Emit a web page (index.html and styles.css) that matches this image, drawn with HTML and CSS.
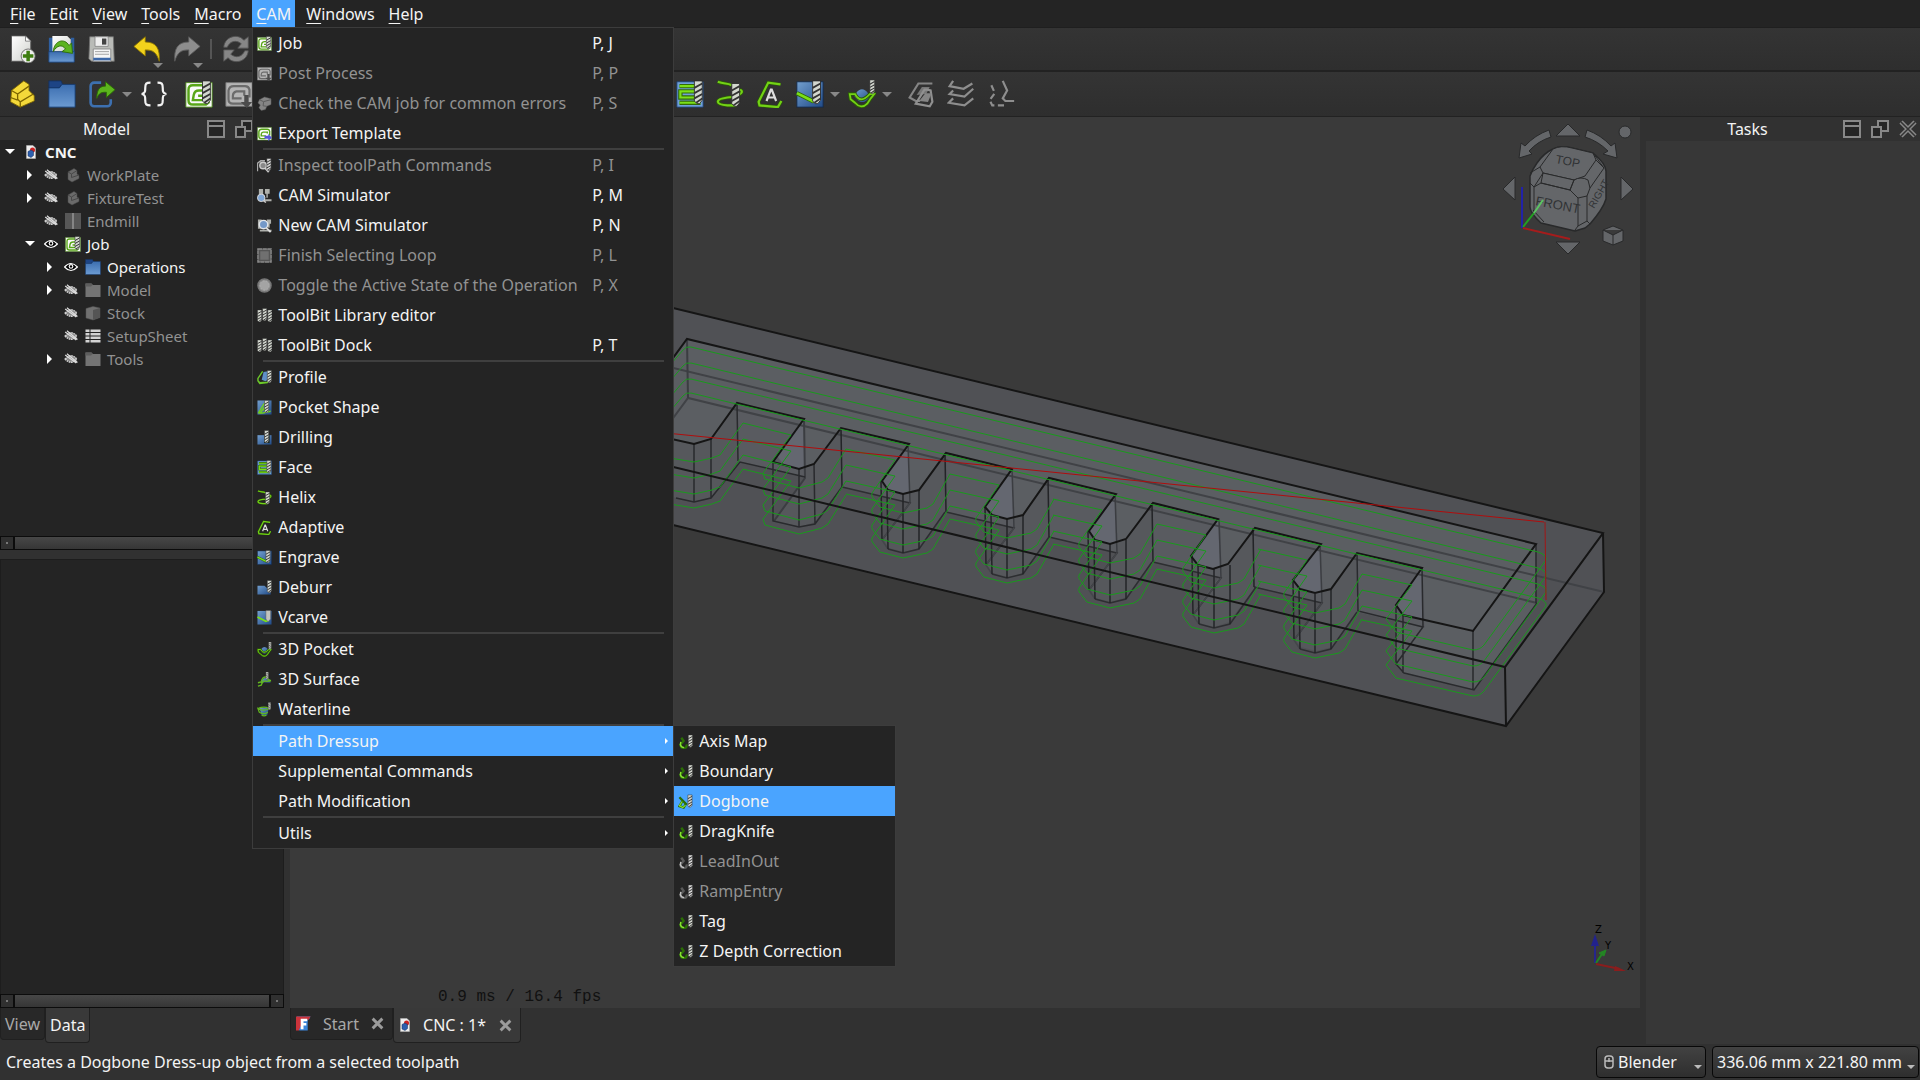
FILE: index.html
```html
<!DOCTYPE html>
<html lang="en">
<head>
<meta charset="utf-8">
<title>CNC</title>
<link rel="stylesheet" href="styles.css">
</head>
<body>
<svg class="defs" aria-hidden="true">
  <defs>
    <linearGradient id="blue" x1="0" y1="0" x2="1" y2="1"><stop offset="0" stop-color="#729fcf"/><stop offset="1" stop-color="#204a87"/></linearGradient>
    <linearGradient id="folderblue" x1="0" y1="0" x2="0" y2="1"><stop offset="0" stop-color="#3c6eb0"/><stop offset="1" stop-color="#6c9bd2"/></linearGradient>
    <linearGradient id="paper" x1="0" y1="0" x2="1" y2="1"><stop offset="0" stop-color="#fff"/><stop offset="1" stop-color="#d0d2cd"/></linearGradient>
    <g id="bit">
      <path d="M0 0h9v22l-3 4H3l-3-3z" fill="#d3d7cf" stroke="#2a2a2a"/>
      <path d="M0 8l9-5M0 14l9-5M0 20l9-5M2 25l7-5" stroke="#333" stroke-width="2" fill="none"/>
    </g>
    <symbol id="i-new" viewBox="0 0 32 32"><path d="M4 1h16l6 6v23H4z" fill="url(#paper)" stroke="#555"/><path d="M20 1l6 6h-6z" fill="#fff" stroke="#777"/><circle cx="23" cy="24" r="8" fill="#eeeeec" stroke="#666"/><path d="M23 18v12M17 24h12" stroke="#3e7d10" stroke-width="4"/></symbol>
    <symbol id="i-open" viewBox="0 0 32 32"><path d="M1 3h5v20H1zM26 3h4v20h-4z" fill="#2f5fa0"/><path d="M5 1h17l4 4v14H5z" fill="url(#paper)"/><path d="M1 19h29v12H1z" fill="url(#folderblue)" stroke="#1d4680"/><path d="M6 19C7 6 19 3 24 12l3-3 1 12-12-2 4-3C16 10 10 12 6 19z" fill="#5bb320" stroke="#2b6a05"/></symbol>
    <symbol id="i-save" viewBox="0 0 32 32"><path d="M2 2h27l1 28H4l-3-3z" fill="#b9bbb7" stroke="#6d6d6d"/><path d="M8 2h15v11H8z" fill="#eee" stroke="#888"/><path d="M16 4h5v7h-5z" fill="#444"/><path d="M6 16h20v14H6z" fill="#f6f6f6" stroke="#888"/><path d="M8 19h16M8 22h16" stroke="#999"/><path d="M6 26h20v3H6z" fill="#3d68a8"/></symbol>
    <symbol id="i-undo" viewBox="0 0 32 32"><path d="M1 13L14 2v6c13 0 17 8 16 22C27 20 23 17 14 17v7z" fill="#f2d21c" stroke="#8a7400"/></symbol>
    <symbol id="i-redo" viewBox="0 0 32 32"><path d="M31 13L18 2v6C5 8 1 16 2 30 5 20 9 17 18 17v7z" fill="#8d8d8d" stroke="#5a5a5a"/></symbol>
    <symbol id="i-refresh" viewBox="0 0 32 32"><path d="M2 14C3 1 19-2 25 6l5-4v13H18l4-5C16 5 9 7 6 14z" fill="#868686" stroke="#555"/><path d="M30 18C29 31 13 34 7 26l-5 4V17h12l-4 5c6 5 13 3 16-4z" fill="#868686" stroke="#555"/></symbol>
    <symbol id="i-part" viewBox="0 0 32 32"><path d="M4 12L18 1l6 4v7l6 6v6L14 31 3 25z" fill="#f4d93a" stroke="#7d6500"/><path d="M4 12l7 4 13-9M11 16v6l3 3 15-9M14 25v6M3 20l8 3" fill="none" stroke="#7d6500" stroke-width="1.5"/></symbol>
    <symbol id="i-folder" viewBox="0 0 32 32"><path d="M1 1h14l2 5h-2L13 9H1z" fill="#1d4485" stroke="#153260"/><path d="M1 9h12l3-4h15v26H1z" fill="url(#folderblue)" stroke="#153a70"/></symbol>
    <symbol id="i-link" viewBox="0 0 32 32"><path d="M15 3H7a4 4 0 0 0-4 4v19a4 4 0 0 0 4 4h15a4 4 0 0 0 4-4v-4" fill="none" stroke="#3d70b0" stroke-width="3"/><path d="M10 21C10 9 15 7 20 7V2l11 9-10 9v-6c-5 0-8 0-11 7z" fill="#5cb51d" stroke="#2b6a05"/></symbol>
    <symbol id="i-braces" viewBox="0 0 32 32"><path d="M12 3c-5 0-6 1-6 6 0 4 0 6-4 7 4 1 4 3 4 7 0 5 1 6 6 6M20 3c5 0 6 1 6 6 0 4 0 6 4 7-4 1-4 3-4 7 0 5-1 6-6 6" fill="none" stroke="#f2f2f2" stroke-width="2.5"/></symbol>
    <symbol id="i-job" viewBox="0 0 32 32"><path d="M1 3h30v28H1z" fill="#fafafa" stroke="#4e8d1a"/><path d="M21 6H9Q4 6 4 11v12q0 5 5 5h15l4-3M20 12h-4q-5 0-6 5l-1 6h11M20 18h-5" fill="none" stroke="#58a618" stroke-width="2.8"/><use href="#bit" x="20" y="1"/></symbol>
    <symbol id="i-post" viewBox="0 0 32 32"><path d="M1 3h30v27H1z" fill="#b5b5b5" stroke="#777"/><path d="M28 20V11q-1-4-5-4H10Q5 7 4 12v10q0 5 5 5h13M22 18v-5h-9q-4 1-4 5v3h10" fill="none" stroke="#6b6b6b" stroke-width="2.5"/><path d="M22 17h5v8h4l-6 7-7-7h4z" fill="#4c4c4c"/></symbol>
    <symbol id="i-check" viewBox="0 0 32 32"><path d="M5 8L16 2l14 4v12l-9 4-3 7-9 2-5-6 3-6-5-4z" fill="#858585" stroke="#555"/><path d="M5 8l9 4 15-4M14 13l-1 8 8 1" stroke="#5a5a5a" fill="none" stroke-width="2"/></symbol>
    <symbol id="i-export" viewBox="0 0 32 32"><path d="M1 3h30v27H1z" fill="#fafafa" stroke="#4e8d1a"/><path d="M27 20V11q-1-4-5-4H10Q5 7 4 12v10q0 5 5 5h9M22 16v-3h-9q-4 1-4 5v3h10" fill="none" stroke="#58a618" stroke-width="3"/><path d="M16 21h8v-4l8 8-8 7v-5h-8z" fill="#5555d8"/></symbol>
    <symbol id="i-inspect" viewBox="0 0 32 32"><path d="M1 28V11l7-5h9" fill="none" stroke="#aaa" stroke-width="3"/><circle cx="13" cy="16" r="7" fill="#888" stroke="#ccc" stroke-width="3"/><path d="M17 21l8 9" stroke="#ccc" stroke-width="4"/><use href="#bit" x="21" y="1"/></symbol>
    <symbol id="i-sim" viewBox="0 0 32 32"><path d="M4 2h9v12H4zM17 2h10v10h-4v9h-3v-9h-3zM14 24h17v4H14z" fill="#aeb0ac"/><circle cx="9" cy="21" r="8" fill="#7fa6d6" stroke="#ddd" stroke-width="2"/><path d="M14 27l5 4" stroke="#ccc" stroke-width="3"/></symbol>
    <symbol id="i-newsim" viewBox="0 0 32 32"><path d="M2 3h8v20H2zM21 3h9v9h-3v9h-3zM6 25h25v4H6z" fill="#aeb0ac"/><circle cx="14" cy="14" r="9" fill="#7398c8" stroke="#e0e4e8" stroke-width="3"/><path d="M20 21l9 9" stroke="#ddd" stroke-width="4"/></symbol>
    <symbol id="i-loop" viewBox="0 0 32 32"><path d="M2 2h28v28H2z" fill="#555" stroke="#8b8b8b" stroke-width="3" stroke-dasharray="9 1"/><path d="M7 7h18v18H7z" fill="#707070"/></symbol>
    <symbol id="i-toggle" viewBox="0 0 32 32"><circle cx="16" cy="16" r="14" fill="#8d8d8d" stroke="#777" stroke-width="3"/><circle cx="16" cy="16" r="10" fill="#a4a4a4" stroke="#c0c0c0" stroke-dasharray="4 3"/></symbol>
    <symbol id="i-bits" viewBox="0 0 32 32"><use href="#bit" x="1" y="4"/><use href="#bit" x="12" y="1"/><use href="#bit" x="23" y="4"/></symbol>
    <symbol id="i-profile" viewBox="0 0 32 32"><path d="M10 21l4-17 12-2v17l-8 5z" fill="#5f8fc8"/><path d="M12 3L2 18v5l4 4 16-1 5-7M2 23l4 6 16-2 7-8" fill="none" stroke="#6cc82a" stroke-width="3"/><use href="#bit" x="22" y="1"/></symbol>
    <symbol id="i-pocket" viewBox="0 0 32 32"><path d="M1 1h30v30H1z" fill="url(#blue)"/><path d="M3 28L15 8l8-2M7 28l9-13M3 28h8l18-4M12 21l7-1" fill="none" stroke="#73d216" stroke-width="3"/><use href="#bit" x="16" y="1"/></symbol>
    <symbol id="i-drill" viewBox="0 0 32 32"><path d="M1 11h30v20H1z" fill="url(#blue)"/><path d="M15 11h12v17H15z" fill="#1e2a22"/><use href="#bit" x="16" y="1"/></symbol>
    <symbol id="i-face" viewBox="0 0 32 32"><path d="M1 2h30v29H1z" fill="#6f9fd8" stroke="#1c3f70"/><path d="M4 7h20M27 13H5v7h20M4 26h24" fill="none" stroke="#326a05" stroke-width="5"/><path d="M4 7h20M27 13H5v7h20M4 26h24" fill="none" stroke="#7be019" stroke-width="2.5"/><use href="#bit" x="21" y="1"/></symbol>
    <symbol id="i-helix" viewBox="0 0 32 32"><path d="M2 2c8 3 10 1 16 4M22 10c14 1 7 9-9 10C-2 22-1 28 13 29h10" fill="none" stroke="#2c5a08" stroke-width="4"/><path d="M2 2c8 3 10 1 16 4M22 10c14 1 7 9-9 10C-2 22-1 28 13 29h10" fill="none" stroke="#73d216" stroke-width="2.5"/><use href="#bit" x="18" y="4"/></symbol>
    <symbol id="i-adapt" viewBox="0 0 32 32"><path d="M28 5L14 3 3 25l1 4 21 2 4-7" fill="none" stroke="#2c5a08" stroke-width="4"/><path d="M28 5L14 3 3 25l1 4 21 2 4-7" fill="none" stroke="#73d216" stroke-width="2.5"/><path d="M12 24l5-13h1l5 13M14 20h7" fill="none" stroke="#ddd" stroke-width="2.5"/></symbol>
    <symbol id="i-engrave" viewBox="0 0 32 32"><path d="M1 2h30v29H1z" fill="url(#blue)" stroke="#12294a"/><path d="M1 15l18 9 6-2" fill="none" stroke="#326a05" stroke-width="5"/><path d="M1 15l18 9 6-2" fill="none" stroke="#7be019" stroke-width="3"/><use href="#bit" x="19" y="1"/></symbol>
    <symbol id="i-deburr" viewBox="0 0 32 32"><path d="M1 12h15l13 12v7H1z" fill="url(#blue)"/><use href="#bit" x="22" y="1"/></symbol>
    <symbol id="i-vcarve" viewBox="0 0 32 32"><path d="M1 2h30v29H1z" fill="url(#blue)"/><path d="M1 15l18 9 6-2" fill="none" stroke="#7be019" stroke-width="4"/><path d="M19 1h10v18l-4 5h-3l-3-5z" fill="#c2c4be" stroke="#555"/></symbol>
    <symbol id="i-pocket3d" viewBox="0 0 32 32"><path d="M9 15q7-9 14 0l2 4q-9 13-18-1z" fill="url(#blue)"/><path d="M2 16h6q6 12 17 0h5l-4 5-4 6q-7 7-14-1l-5-4z" fill="none" stroke="#2c5a08" stroke-width="4"/><path d="M2 16h6q6 12 17 0h5l-4 5-4 6q-7 7-14-1l-5-4z" fill="none" stroke="#73d216" stroke-width="2"/><g transform="translate(25 0) scale(.6)"><use href="#bit"/></g></symbol>
    <symbol id="i-surf3d" viewBox="0 0 32 32"><path d="M8 24q4-16 18-9l3 8-15-1z" fill="url(#blue)"/><path d="M2 23l7-2q3-12 12-10 2 8 9 7M2 30l7-2q4-12 11-8l10-1" fill="none" stroke="#62b81e" stroke-width="3"/><g transform="translate(19 0) scale(.6)"><use href="#bit"/></g></symbol>
    <symbol id="i-water" viewBox="0 0 32 32"><path d="M5 12h20l-3 16H10z" fill="url(#blue)"/><path d="M2 14q13-6 24 0-12 7-24 0l3 8q10 6 18 0M10 28q5 3 10 0" fill="none" stroke="#62b81e" stroke-width="2.5"/><g transform="translate(24 1) scale(.6)"><use href="#bit"/></g></symbol>
    <symbol id="i-dress" viewBox="0 0 32 32"><path d="M7 8l5 7-7 8q1 7 8 7 7-1 5-8" fill="none" stroke="#2c7004" stroke-width="5"/><path d="M6 17l-1 6q2 6 8 6" fill="none" stroke="#8ae234" stroke-width="3"/><use href="#bit" x="22" y="2"/></symbol>
    <symbol id="i-dogbone" viewBox="0 0 32 32"><path d="M3 7l14 14-5 8-9-3 6-10" fill="none" stroke="#2c7004" stroke-width="5"/><path d="M9 16l-6 9 7 4 6-5" fill="none" stroke="#8ae234" stroke-width="2.5"/><use href="#bit" x="21" y="2"/></symbol>
    <symbol id="i-g1" viewBox="0 0 32 32"><path d="M29 4H13L3 20l7 4h5" fill="none" stroke="#858585" stroke-width="2.5"/><path d="M11 17L17 8h9l-4 8z" fill="#777"/><path d="M23 11h-3L10 27l16 3 3-5-2-13z" fill="none" stroke="#909090" stroke-width="2.5"/><path d="M14 24l7-9h7l-4 10z" fill="#858585"/></symbol>
    <symbol id="i-g2" viewBox="0 0 32 32"><path d="M7 1L3 7l16 3L29 4M7 12l-4 4 17 3 10-9M7 21l-5 5 18 3 10-8" fill="none" stroke="#8e8e8e" stroke-width="2.5"/></symbol>
    <symbol id="i-g3" viewBox="0 0 32 32"><path d="M18 1l5 11-5 9 3 3h10" fill="none" stroke="#8e8e8e" stroke-width="2.5"/><path d="M5 6l4 9-6 8 3 6h14" fill="none" stroke="#8e8e8e" stroke-width="2.5" stroke-dasharray="7 4"/></symbol>
    <symbol id="i-doc" viewBox="0 0 20 28"><path d="M1 1h13l5 5v21H1z" fill="#eee" stroke="#bbb"/><circle cx="13" cy="10" r="5" fill="#cc2222"/><path d="M4 13l6-3 5 3v8l-5 4-6-3z" fill="#2d5fae" stroke="#152e58"/></symbol>
    <symbol id="i-eye" viewBox="0 0 24 20"><path d="M1 10Q12-2 23 10 12 22 1 10z" fill="#000" stroke="#fff" stroke-width="2"/><circle cx="12" cy="9" r="4" fill="#fff"/><circle cx="12" cy="9" r="2" fill="#000"/></symbol>
    <symbol id="i-hid" viewBox="0 0 24 20"><path d="M2 10Q12-1 22 10 12 21 2 10z" fill="#888" stroke="#d2d2d2" stroke-width="2.5" stroke-dasharray="3 1"/><path d="M2 3l19 14M5 1l18 15" stroke="#ddd" stroke-width="2"/></symbol>
    <symbol id="i-body" viewBox="0 0 32 32"><path d="M6 10L18 3l6 4v7l4 3v6L14 30l-8-5z" fill="#6a6a6a" stroke="#4a4a4a"/><path d="M6 10l7 4 11-7M13 14v7l15-5" fill="none" stroke="#484848" stroke-width="2"/></symbol>
    <symbol id="i-mill" viewBox="0 0 32 32"><path d="M0 0h32v32H0z" fill="#575757"/><path d="M14 0h4v32h-4z" fill="#858585"/></symbol>
    <symbol id="i-gfold" viewBox="0 0 32 32"><path d="M1 3h12l3 3h15v24H1z" fill="#747474"/><path d="M1 3h12l2 3-3 3H1z" fill="#5d5d5d"/></symbol>
    <symbol id="i-stock" viewBox="0 0 32 32"><path d="M2 7l14-4 14 3v19l-14 5-14-4z" fill="#707070" stroke="#555"/><path d="M16 10l14-4v19l-14 5z" fill="#555"/></symbol>
    <symbol id="i-sheet" viewBox="0 0 32 32"><path d="M1 3h8v5H1zM11 3h20v5H11zM1 10h8v5H1zM11 10h20v5H11zM1 17h8v5H1zM11 17h20v5H11zM1 24h8v5H1zM11 24h20v5H11z" fill="#d2d2d2"/></symbol>
    <symbol id="i-fc" viewBox="0 0 32 32"><path d="M2 1h29l-3 6h-3v24H8l-6-3z" fill="#3a84d8"/><path d="M0 1h31l-4 7H12v9L6 31H0z" fill="#cb333b"/><path d="M10 6h14v5h-8v4h6v5h-6v8h-6z" fill="#fff"/></symbol>
    <symbol id="i-x" viewBox="0 0 16 16"><path d="M2 2l12 12M14 2L2 14" stroke="#9b9b9b" stroke-width="3.5"/></symbol>
    <symbol id="i-px" viewBox="0 0 18 18"><path d="M2 2l14 14M16 2L2 16" stroke="#888" stroke-width="4.5"/><path d="M2 2l14 14M16 2L2 16" stroke="#333" stroke-width="1.5"/></symbol>
    <symbol id="i-panel" viewBox="0 0 18 18"><path d="M1 1h16v16H1zM2 6h14" fill="#252525" stroke="#888" stroke-width="2"/></symbol>
    <symbol id="i-float" viewBox="0 0 18 18"><path d="M7 1h10v10H7z" fill="#252525" stroke="#888" stroke-width="2"/><path d="M1 7h9v10H1z" fill="#252525" stroke="#888" stroke-width="2"/></symbol>
  </defs>
</svg>

<nav class="menubar">
  <button><u>F</u>ile</button>
  <button><u>E</u>dit</button>
  <button><u>V</u>iew</button>
  <button><u>T</u>ools</button>
  <button><u>M</u>acro</button>
  <div class="menu-holder">
    <button class="open"><u>C</u>AM</button>
    <div class="menu">
      <button><svg><use href="#i-job"/></svg><span>Job</span><kbd>P, J</kbd></button>
      <button disabled><svg><use href="#i-post"/></svg><span>Post Process</span><kbd>P, P</kbd></button>
      <button disabled><svg><use href="#i-check"/></svg><span>Check the CAM job for common errors</span><kbd>P, S</kbd></button>
      <button><svg><use href="#i-export"/></svg><span>Export Template</span></button>
      <hr>
      <button disabled><svg><use href="#i-inspect"/></svg><span>Inspect toolPath Commands</span><kbd>P, I</kbd></button>
      <button><svg><use href="#i-sim"/></svg><span>CAM Simulator</span><kbd>P, M</kbd></button>
      <button><svg><use href="#i-newsim"/></svg><span>New CAM Simulator</span><kbd>P, N</kbd></button>
      <button disabled><svg><use href="#i-loop"/></svg><span>Finish Selecting Loop</span><kbd>P, L</kbd></button>
      <button disabled><svg><use href="#i-toggle"/></svg><span>Toggle the Active State of the Operation</span><kbd>P, X</kbd></button>
      <button><svg><use href="#i-bits"/></svg><span>ToolBit Library editor</span></button>
      <button><svg><use href="#i-bits"/></svg><span>ToolBit Dock</span><kbd>P, T</kbd></button>
      <hr>
      <button><svg><use href="#i-profile"/></svg><span>Profile</span></button>
      <button><svg><use href="#i-pocket"/></svg><span>Pocket Shape</span></button>
      <button><svg><use href="#i-drill"/></svg><span>Drilling</span></button>
      <button><svg><use href="#i-face"/></svg><span>Face</span></button>
      <button><svg><use href="#i-helix"/></svg><span>Helix</span></button>
      <button><svg><use href="#i-adapt"/></svg><span>Adaptive</span></button>
      <button><svg><use href="#i-engrave"/></svg><span>Engrave</span></button>
      <button><svg><use href="#i-deburr"/></svg><span>Deburr</span></button>
      <button><svg><use href="#i-vcarve"/></svg><span>Vcarve</span></button>
      <hr>
      <button><svg><use href="#i-pocket3d"/></svg><span>3D Pocket</span></button>
      <button><svg><use href="#i-surf3d"/></svg><span>3D Surface</span></button>
      <button><svg><use href="#i-water"/></svg><span>Waterline</span></button>
      <hr>
      <div class="sub-holder">
        <button class="open parent">Path Dressup</button>
        <div class="menu submenu">
          <button><svg><use href="#i-dress"/></svg><span>Axis Map</span></button>
          <button><svg><use href="#i-dress"/></svg><span>Boundary</span></button>
          <button class="open"><svg><use href="#i-dogbone"/></svg><span>Dogbone</span></button>
          <button><svg><use href="#i-dress"/></svg><span>DragKnife</span></button>
          <button disabled><svg><use href="#i-dress"/></svg><span>LeadInOut</span></button>
          <button disabled><svg><use href="#i-dress"/></svg><span>RampEntry</span></button>
          <button><svg><use href="#i-dress"/></svg><span>Tag</span></button>
          <button><svg><use href="#i-dress"/></svg><span>Z Depth Correction</span></button>
        </div>
      </div>
      <button class="parent">Supplemental Commands</button>
      <button class="parent">Path Modification</button>
      <hr>
      <button class="parent">Utils</button>
    </div>
  </div>
  <button><u>W</u>indows</button>
  <button><u>H</u>elp</button>
</nav>

<div class="toolbar">
  <button class="tool"><svg><use href="#i-new"/></svg></button>
  <button class="tool"><svg><use href="#i-open"/></svg></button>
  <button class="tool"><svg><use href="#i-save"/></svg></button>
  <span class="space"></span>
  <button class="tool history"><svg><use href="#i-undo"/></svg></button>
  <button class="tool history"><svg><use href="#i-redo"/></svg></button>
  <span class="divider"></span>
  <button class="tool"><svg><use href="#i-refresh"/></svg></button>
</div>
<div class="toolbar">
  <button class="tool"><svg><use href="#i-part"/></svg></button>
  <button class="tool"><svg><use href="#i-folder"/></svg></button>
  <button class="tool"><svg><use href="#i-link"/></svg></button>
  <span class="caret"></span>
  <button class="tool"><svg><use href="#i-braces"/></svg></button>
  <span class="space"></span>
  <button class="tool"><svg><use href="#i-job"/></svg></button>
  <button class="tool"><svg><use href="#i-post"/></svg></button>
  <span class="gap"></span>
  <button class="tool"><svg><use href="#i-face"/></svg></button>
  <button class="tool"><svg><use href="#i-helix"/></svg></button>
  <button class="tool"><svg><use href="#i-adapt"/></svg></button>
  <button class="tool"><svg><use href="#i-engrave"/></svg></button>
  <span class="caret"></span>
  <button class="tool"><svg><use href="#i-pocket3d"/></svg></button>
  <span class="caret wide"></span>
  <button class="tool"><svg><use href="#i-g1"/></svg></button>
  <button class="tool"><svg><use href="#i-g2"/></svg></button>
  <button class="tool"><svg><use href="#i-g3"/></svg></button>
</div>

<main>
  <aside class="dock left">
    <header><h2>Model</h2><button><svg><use href="#i-panel"/></svg></button><button><svg><use href="#i-float"/></svg></button><button><svg><use href="#i-px"/></svg></button></header>
    <ul class="tree">
      <li class="root"><i class="down"></i><svg class="doc"><use href="#i-doc"/></svg>CNC</li>
      <li class="l1 off"><i class="right"></i><svg class="eye"><use href="#i-hid"/></svg><svg class="ic"><use href="#i-body"/></svg>WorkPlate</li>
      <li class="l1 off"><i class="right"></i><svg class="eye"><use href="#i-hid"/></svg><svg class="ic"><use href="#i-body"/></svg>FixtureTest</li>
      <li class="l1 off"><i></i><svg class="eye"><use href="#i-hid"/></svg><svg class="ic"><use href="#i-mill"/></svg>Endmill</li>
      <li class="l1"><i class="down"></i><svg class="eye"><use href="#i-eye"/></svg><svg class="ic"><use href="#i-job"/></svg>Job</li>
      <li class="l2"><i class="right"></i><svg class="eye"><use href="#i-eye"/></svg><svg class="ic"><use href="#i-folder"/></svg>Operations</li>
      <li class="l2 off"><i class="right"></i><svg class="eye"><use href="#i-hid"/></svg><svg class="ic"><use href="#i-gfold"/></svg>Model</li>
      <li class="l2 off"><i></i><svg class="eye"><use href="#i-hid"/></svg><svg class="ic"><use href="#i-stock"/></svg>Stock</li>
      <li class="l2 off"><i></i><svg class="eye"><use href="#i-hid"/></svg><svg class="ic"><use href="#i-sheet"/></svg>SetupSheet</li>
      <li class="l2 off"><i class="right"></i><svg class="eye"><use href="#i-hid"/></svg><svg class="ic"><use href="#i-gfold"/></svg>Tools</li>
    </ul>
    <div class="scroll"><b></b><span></span><b></b></div>
    <div class="props"></div>
    <div class="scroll"><b></b><span></span><b></b></div>
    <div class="tabs"><button>View</button><button class="on">Data</button></div>
  </aside>

  <section class="center">
    <svg class="view" viewBox="290 117 1350 891" preserveAspectRatio="xMinYMin slice">
      <defs>
        <g id="wall"><path d="M0 0L67 16L69 75L1 59z" fill="#595b60"/></g>
        <path id="shade" d="M67 16L40 53L47 62L62 66L69 65z" fill="#646770"/>
        <g id="tooth" fill="none">
          <path d="M1 59L69 75L41 112M47 121L62 125L78 121L104 84" stroke="#2d2e31" stroke-width="1.5"/>
          <path d="M69 75L41 112L47 121" stroke="#44464a" stroke-width="1.5"/>
          <path d="M67 16L69 75" stroke="#3b3d41" stroke-width="1.5"/>
          <path d="M0 0L1 59M40 53L41 112M46 62L47 121M62 66V125M78 62V121" stroke="#232427" stroke-width="1.5"/>
        </g>
        <path id="cut" d="M5 21L54 32L31 65Q30 68 32 70L39 79L62 85L86 80L92 76L109 46" fill="none"/>
        <g id="cuts" stroke="#199a1c"><use href="#cut"/><use href="#cut" y="16"/><use href="#cut" y="32"/><use href="#cut" y="45"/></g>
        <g id="loop" fill="none">
          <path d="M640 400L683 350Q686 346 691 347L1538 552Q1547 555 1546 560L1484 645Q1480 650 1473 650L1396 632L1386 619L1412 585L1362 574"/>
          <path d="M670 458L676 459L694 462L712 458L720 455L743 423L791 435L763 473L765 479L799 488L822 482L828 478L846 449"/>
        </g>
      </defs>
      <path d="M640 300L1603 533L1604 592L1506 726L640 517z" fill="#505155"/>
      <g fill="#5b5e62">
        <path id="pocket" d="M640 403L687 339L1536 544L1473 631L1403 615L1396 605L1422 568L1357 553L1331 589L1315 593L1300 589L1293 580L1321 544L1255 528L1228 564L1213 569L1198 565L1191 556L1218 519L1153 503L1126 539L1110 544L1095 540L1089 531L1116 494L1049 478L1023 515L1007 519L992 515L985 507L1012 469L946 453L919 490L903 494L888 490L882 481L909 444L841 428L814 464L799 469L773 462L804 419L737 403L711 439L694 444L640 432z"/>
        <use href="#pocket" x="1" y="58" fill="#56585c"/>
        <use href="#pocket"/>
        <path d="M1403 615L1473 631L1536 544V603L1474 690L1404 674L1397 664V605z"/>
      </g>
      <use href="#wall" x="737" y="403"/><use href="#wall" x="841" y="428"/><use href="#wall" x="946" y="453"/><use href="#wall" x="1049" y="478"/><use href="#wall" x="1153" y="503"/><use href="#wall" x="1254" y="528"/><use href="#wall" x="1356" y="553"/>
      <use href="#shade" x="737" y="403"/><use href="#shade" x="841" y="428"/><use href="#shade" x="945" y="453"/><use href="#shade" x="1048" y="478"/><use href="#shade" x="1151" y="503"/><use href="#shade" x="1253" y="528"/>
      <path d="M1422 568L1396 605L1403 615L1423 620z" fill="#646770"/>
      <path d="M640 360L1604 592M640 463L688 398L1537 603" fill="none" stroke="#404246" stroke-width="2"/>
      <path d="M687 339L688 398M804 419L805 478L774 521" fill="none" stroke="#3b3d41" stroke-width="2"/>
      <g fill="none" stroke="#292a2d" stroke-width="1.5">
        <path d="M676 498L694 502L711 498L740 462L805 477M694 444V502M711 439V498M737 403L738 461M773 462V521L799 527L815 524L842 487M799 469V527M814 464L815 524"/>
        <path d="M1357 553L1358 611L1423 627L1396 664L1404 673L1474 690L1537 603M1422 568L1423 627M1396 605V664M1403 615V673M1473 631V690M1536 544V603"/>
      </g>
      <use href="#tooth" x="841" y="428"/><use href="#tooth" x="945" y="453"/><use href="#tooth" x="1048" y="478"/><use href="#tooth" x="1152" y="503"/><use href="#tooth" x="1253" y="528"/>
      <use href="#pocket" fill="none" stroke="#151515" stroke-width="2"/>
      <g stroke="#199a1c" stroke-width="1"><use href="#loop"/><use href="#loop" y="16"/><use href="#loop" y="32"/><use href="#loop" y="46"/></g>
      <use href="#cuts" x="841" y="428"/><use href="#cuts" x="945" y="453"/><use href="#cuts" x="1048" y="478"/><use href="#cuts" x="1152" y="503"/><use href="#cuts" x="1253" y="528"/>
      <path d="M640 431L676 434L1544 522" fill="none" stroke="#b00d0d" stroke-width="1"/>
      <path d="M1545 522L1546 600" stroke="#a01616" stroke-width="1"/>
      <path d="M640 300L1603 533L1505 667L640 459M640 517L1506 726L1604 592L1603 533M1505 667L1506 726" fill="none" stroke="#151515" stroke-width="2"/>

      <g fill="#646669" stroke="#28292a" stroke-width="1" stroke-linejoin="round">
        <path d="M1568 124L1580 136H1556zM1568 254L1556 242H1580zM1503 189L1515 177V200zM1633 189L1621 177V200z"/>
        <path d="M1549 130L1551 137Q1538 141 1529 151L1532 154L1519 158L1521 143L1525 146Q1535 135 1549 130zM1587 130L1585 137Q1598 141 1608 151L1603 154L1617 158L1615 143L1611 146Q1601 135 1587 130z"/>
        <circle cx="1625" cy="132" r="6"/>
        <path d="M1613 226L1623 230V241L1613 245L1603 241V230zM1603 230L1613 235L1623 230M1613 235V245"/>
        <path d="M1553 149Q1561 145 1572 148L1593 153Q1606 164 1606 171V199Q1603 209 1590 224L1585 228L1575 231L1541 223Q1530 213 1530 207V176Q1532 170 1537 163Q1544 153 1553 149z" stroke-width="1.5"/>
        <path d="M1553 149Q1561 145 1572 148L1593 153L1596 160L1585 176L1574 180L1543 173L1540 167z"/>
        <path d="M1543 173L1574 180L1570 190L1541 183zM1574 180Q1581 176 1588 180L1590 188L1587 196L1578 198L1570 190z"/>
        <path d="M1530 183L1534 187V212M1534 187L1541 183L1570 190L1578 198V226L1575 230M1587 196V221L1590 224M1578 226L1587 221M1540 167L1530 173M1543 173L1534 187M1596 160L1604 168L1590 188M1593 153L1604 168M1533 210L1544 222" fill="none"/>
      </g>
      <g class="faces">
        <text x="1555" y="163" transform="rotate(11 1555 163)" class="small">TOP</text>
        <text x="1535" y="205" transform="rotate(11 1535 205)">FRONT</text>
        <text x="1594" y="209" transform="rotate(-60 1594 209)" class="tiny">RIGHT</text>
      </g>
      <g fill="none" stroke-width="2"><path d="M1522 187V228" stroke="#2222a8"/><path d="M1523 227L1534 213" stroke="#22a022"/><path d="M1534 213L1543 200" stroke="#5cc462"/><path d="M1523 228L1570 239" stroke="#a51c1c"/></g>
      <g fill="none" stroke-width="2"><path d="M1595 963V940" stroke="#25258c"/><path d="M1596 963L1602 954" stroke="#238523"/><path d="M1596 964L1620 969" stroke="#8a1d1d"/></g>
      <path d="M1595 934L1599 946H1591z" fill="#22228c"/><path d="M1606 950L1604 956L1599 953z" fill="#238523" stroke="#238523"/><path d="M1626 971L1615 966L1614 971z" fill="#8a1d1d"/>
      <g class="axes"><text x="1595" y="933">Z</text><text x="1605" y="949">Y</text><text x="1627" y="970">X</text></g>
      <text class="fps" x="438" y="1001">0.9 ms / 16.4 fps</text>
    </svg>
    <div class="tabs docs">
      <button><svg class="fc"><use href="#i-fc"/></svg>Start<svg class="x"><use href="#i-x"/></svg></button>
      <button class="on"><svg class="doc"><use href="#i-doc"/></svg>CNC : 1*<svg class="x"><use href="#i-x"/></svg></button>
    </div>
  </section>

  <aside class="dock tasks">
    <header><h2>Tasks</h2><button><svg><use href="#i-panel"/></svg></button><button><svg><use href="#i-float"/></svg></button><button><svg><use href="#i-px"/></svg></button></header>
    <div class="task-body"></div>
  </aside>
</main>

<footer>
  <p>Creates a Dogbone Dress-up object from a selected toolpath</p>
  <div class="picker nav">
    <svg viewBox="0 0 10 14"><rect x="1" y="1" width="8" height="12" rx="3" fill="#333" stroke="#bbb" stroke-width="1.5"/><path d="M1 6h8M5 3v4" stroke="#bbb" stroke-width="1.5"/></svg>
    <select aria-label="Navigation style"><option>Blender</option></select>
  </div>
  <div class="picker size"><select aria-label="View size"><option>336.06 mm x 221.80 mm</option></select></div>
</footer>
</body>
</html>
```
FILE: styles.css
```css
* { box-sizing: border-box; }

body {
  margin: 0;
  min-height: 100vh;
  display: flex;
  flex-direction: column;
  background: #313131;
  color: #f4f4f4;
  font: 16px/20px "Noto Sans", sans-serif;
}

button, select {
  font: inherit;
  color: inherit;
  background: none;
  border: 0;
  margin: 0;
  padding: 0;
  white-space: nowrap;
}

svg { display: block; flex: none; }
.defs { position: absolute; width: 0; height: 0; }

/* Menu bar */
.menubar {
  display: flex;
  gap: 6px;
  height: 28px;
  padding: 0 6px;
  background: #242424;
  border-bottom: 1px solid #1f1f1f;
}
.menubar > button, .menu-holder > button { height: 27px; padding: 0 4px; }
.menubar u { text-decoration-thickness: 1px; text-underline-offset: 3px; }
.menu-holder { position: relative; z-index: 5; margin: 0 1px; }
.open { background: #4aa4ff; }

.menu {
  position: absolute;
  top: 27px;
  left: 0;
  width: 422px;
  display: flex;
  flex-direction: column;
  background: #242424;
  border: 1px solid #3c3c3c;
}
.menu button {
  display: flex;
  align-items: center;
  width: 100%;
  height: 30px;
  padding-left: 4px;
  text-align: left;
}
.menu button svg { width: 15px; height: 15px; margin-right: 6px; }
.menu button span { flex: 1; }
.menu button kbd { width: 81px; font: inherit; }
.menu button:disabled { color: #929292; }
.menu button:disabled svg { filter: grayscale(1); }
.menu hr {
  width: 401px;
  height: 2px;
  margin: 0 0 0 10px;
  border: 0;
  background: #3f3f3f;
}
.sub-holder { position: relative; }
.menu .parent { justify-content: space-between; padding: 0 5px 0 25px; }
.menu .parent::after {
  content: "";
  border: 3px solid transparent;
  border-left-color: #fff;
  border-right: 0;
}
.submenu { top: -1px; left: 420px; width: 223px; }

/* Tool bars */
.toolbar {
  display: flex;
  align-items: center;
  gap: 8px;
  height: 44px;
  padding: 0 6px;
  background: linear-gradient(#343434, #2e2e2e);
  border-bottom: 2px solid #222;
}
.toolbar + .toolbar { height: 45px; border-bottom-width: 1px; }
.tool { flex: none; width: 32px; height: 32px; padding: 2px; position: relative; }
.tool svg { width: 28px; height: 28px; }
.history::after {
  content: "";
  position: absolute;
  right: 0;
  bottom: -3px;
  border: 5px solid transparent;
  border-top-color: #888;
  border-bottom: 0;
}
.space { width: 5px; margin-left: -8px; flex: none; }
.divider { width: 2px; height: 20px; margin-left: -1px; background: #555; }
.caret { border: 5px solid transparent; border-top-color: #888; border-bottom: 0; margin: 0 -2px 0 -4px; }
.caret.wide { margin-right: 5px; }
.gap { flex: none; width: 403px; }

/* Main area */
main { flex: 1; display: flex; }
.dock { display: flex; flex-direction: column; }
.dock.left { width: 290px; padding-right: 6px; }
.dock header { display: flex; align-items: center; gap: 10px; height: 24px; padding: 0 3px 0 16px; }
.dock h2 { flex: 1; margin: 0; font-size: 16px; font-weight: 400; text-align: center; }
.dock header svg { width: 18px; height: 18px; }
.dock.left header { height: 23px; }
.tree {
  flex: 396 0 0;
  margin: 0;
  padding: 0;
  list-style: none;
  background: #242424;
  font-size: 15px;
}
.tree li { display: flex; align-items: center; height: 23px; }
.tree .root { font-weight: 700; }
.tree .l1 { padding-left: 20px; }
.tree .l2 { padding-left: 40px; }
.tree .off { color: #929292; }
.tree i { width: 19px; flex: none; display: flex; justify-content: center; }
.tree .down::after { content: ""; border: 5px solid transparent; border-top-color: #fff; border-bottom: 0; }
.tree .right::after { content: ""; border: 5px solid transparent; border-left-color: #fff; border-right: 0; }
.tree .doc { width: 10px; height: 14px; margin: 0 9px 0 7px; }
.tree .eye { width: 14px; height: 12px; margin: 0 5px; }
.tree .ic { width: 16px; height: 16px; margin: 0 6px 0 2px; }

.scroll { display: flex; gap: 2px; height: 14px; padding: 1px; background: #0c0c0c; }
.scroll b { width: 12px; background: #303030; display: grid; place-items: center; }
.scroll b::after { content: ""; width: 2px; height: 2px; background: #777; }
.scroll span { flex: 1; background: linear-gradient(#474747, #363636); }
.props { flex: 434 0 0; margin-top: 9px; background: #242424; border: 1px solid #1d1d1d; border-bottom: 0; }

.tabs { display: flex; align-items: flex-start; height: 36px; }
.tabs button {
  display: flex;
  align-items: center;
  height: 32px;
  padding: 0 4px;
  background: #282828;
  color: #a8a8a8;
  border: 1px solid #202020;
  border-top: 0;
  border-radius: 0 0 4px 4px;
}
.tabs .on { height: 35px; background: #393939; color: #f4f4f4; }
.tabs .x { width: 13px; height: 13px; }
.docs button { justify-content: space-between; width: 103px; padding: 0 8px 0 5px; }
.docs .on { width: 128px; padding: 0 8px 0 6px; }
.docs .fc { width: 15px; height: 17px; }
.docs .doc { width: 10px; height: 16px; }

.center { flex: 1; min-width: 0; display: flex; flex-direction: column; }
.view { flex: 1 1 0; width: 100%; min-height: 0; background: #3a3a3a; }
.view .faces text { font: 13px "Liberation Sans", sans-serif; fill: #303234; }
.view .faces .small { font-size: 12px; }
.view .faces .tiny { font-size: 10px; }
.view .axes text { font: 10px "DejaVu Sans", sans-serif; fill: #000; }
.view .fps { font: 16px "Liberation Mono", monospace; fill: #111; white-space: pre; }

.tasks { width: 280px; padding-left: 6px; }
.task-body { flex: 1; background: #373737; }

/* Status bar */
footer { display: flex; align-items: center; gap: 6px; height: 36px; padding: 0 1px 0 6px; }
footer p { flex: 1; margin: 0; }
.picker {
  position: relative;
  display: flex;
  align-items: center;
  height: 32px;
  background: linear-gradient(#424242, #2e2e2e);
  border: 1px solid #080808;
  border-radius: 4px;
}
.picker::after {
  content: "";
  position: absolute;
  right: 3px;
  bottom: 8px;
  border: 4px solid transparent;
  border-top-color: #bbb;
  border-bottom: 0;
}
.picker select { appearance: none; width: 100%; height: 100%; padding-left: 4px; }
.picker svg { width: 10px; height: 14px; margin-left: 7px; }
.picker.nav { width: 110px; }
.picker.size { width: 207px; }
```
